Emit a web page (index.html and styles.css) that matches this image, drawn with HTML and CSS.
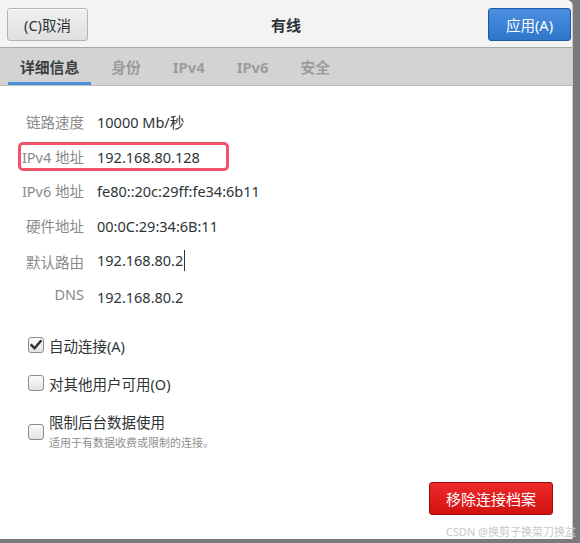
FILE: index.html
```html
<!DOCTYPE html>
<html>
<head>
<meta charset="utf-8">
<link rel="stylesheet" href="styles.css">
</head>
<body>
<div class="window">
  <div class="header">
    <button class="btn btn-cancel">(C)取消</button>
    <div class="title">有线</div>
    <button class="btn btn-apply">应用(A)</button>
  </div>
  <div class="tabs">
    <div class="tab active">详细信息</div>
    <div class="tab">身份</div>
    <div class="tab">IPv4</div>
    <div class="tab">IPv6</div>
    <div class="tab">安全</div>
  </div>
  <div class="content">
    <div class="details">
      <div class="row"><span class="label">链路速度</span><span class="value">10000 Mb/秒</span></div>
      <div class="row hl"><span class="label">IPv4 地址</span><span class="value">192.168.80.128</span><span class="highlight"></span></div>
      <div class="row short"><span class="label">IPv6 地址</span><span class="value">fe80::20c:29ff:fe34:6b11</span></div>
      <div class="row tall"><span class="label">硬件地址</span><span class="value">00:0C:29:34:6B:11</span></div>
      <div class="row"><span class="label">默认路由</span><span class="value">192.168.80.2<span class="caret"></span></span></div>
      <div class="row dns"><span class="label">DNS</span><span class="value">192.168.80.2</span></div>
    </div>
    <div class="checks">
      <div class="check"><span class="box checked"><svg width="12" height="12" viewBox="0 0 12 12"><path d="M1.5 6.2 L4.6 9.3 L10.6 2.2" fill="none" stroke="#2e3436" stroke-width="2.4" stroke-linecap="square"/></svg></span><span class="ctext">自动连接(A)</span></div>
      <div class="check"><span class="box"></span><span class="ctext">对其他用户可用(O)</span></div>
      <div class="check multi"><span class="box"></span><div class="ctexts"><span class="ctext">限制后台数据使用</span><span class="sub">适用于有数据收费或限制的连接。</span></div></div>
    </div>
    <div class="actions">
      <button class="btn btn-remove">移除连接档案</button>
    </div>
  </div>
  <div class="watermark">CSDN @换剪子换菜刀换盆</div>
</div>
</body>
</html>
```
FILE: styles.css
```css
* { box-sizing: border-box; }
html, body { margin: 0; padding: 0; }
body {
  width: 580px;
  height: 543px;
  background: #7a7a7a;
  font-family: "Noto Sans", "Noto Sans CJK SC", sans-serif;
  overflow: hidden;
}
.window {
  position: relative;
  width: 573px;
  height: 539px;
  background: #ffffff;
  border-top-right-radius: 6px;
  border-right: 1px solid #c8c8c8;
  display: flex;
  flex-direction: column;
}
.header {
  height: 48px;
  background: #f3f3f3;
  border-top-right-radius: 6px;
  border-bottom: 1px solid #a8a8a8;
  display: flex;
  align-items: center;
  justify-content: space-between;
  padding: 1px 1px 0 7px;
}
.btn {
  font-family: "Noto Sans", "Noto Sans CJK SC", sans-serif;
  font-size: 14.5px;
  height: 33px;
  border-radius: 3px;
  padding: 0;
  display: flex;
  align-items: center;
  justify-content: center;
}
.btn-cancel {
  width: 81px;
  color: #2e3436;
  background: linear-gradient(#f0f0f0, #e0e0e0);
  border: 1px solid #b4b4b4;
  box-shadow: inset 0 1px #fff;
}
.btn-apply {
  width: 83px;
  color: #ffffff;
  background: linear-gradient(#4a8ee0, #2f76cb);
  border: 1px solid #1d5aa3;
}
.title {
  font-size: 15px;
  font-weight: bold;
  color: #2e3436;
  position: absolute;
  left: 0;
  right: 0;
  top: 14px;
  text-align: center;
  pointer-events: none;
}
.tabs {
  height: 38px;
  background: #d3d3d3;
  border-bottom: 1px solid #bcbcbc;
  display: flex;
  padding-left: 8px;
  gap: 8px;
}
.tab {
  padding: 0 12px;
  font-size: 14.8px;
  font-weight: bold;
  color: #9c9c9c;
  display: flex;
  align-items: center;
  border-bottom: 3px solid transparent;
  padding-top: 3px;
}
.tab.active {
  color: #3a3f40;
  border-bottom-color: #4a90d9;
}
.content {
  flex: 1;
  display: flex;
  flex-direction: column;
  padding-top: 18px;
}
.details {
  display: flex;
  flex-direction: column;
}
.row {
  position: relative;
  height: 35px;
  display: flex;
  align-items: center;
  font-size: 14.5px;
}
.row.short { height: 33px; }
.row.tall { height: 37px; }
.label {
  width: 84px;
  text-align: right;
  color: #8a8a8a;
  flex: none;
}
.value {
  margin-left: 13px;
  color: #2e3436;
  position: relative;
}
.dns .label { position: relative; top: -3px; }
.highlight {
  position: absolute;
  left: 18px;
  top: 3px;
  width: 211px;
  height: 29px;
  border: 3px solid #f15268;
  border-radius: 5px;
}
.caret {
  display: inline-block;
  width: 1px;
  height: 21px;
  background: #2e3436;
  vertical-align: middle;
  margin-left: 1px;
  position: relative;
  top: -2px;
}
.checks {
  margin-top: 21px;
  padding-left: 28px;
  display: flex;
  flex-direction: column;
  gap: 18px;
}
.check {
  display: flex;
  align-items: center;
  gap: 5px;
  height: 20px;
}
.check.multi {
  height: 42px;
}
.box {
  width: 16px;
  height: 16px;
  border: 1px solid #8d8d8d;
  border-radius: 3px;
  background: linear-gradient(#fbfbfb, #e3e3e3);
  display: flex;
  align-items: center;
  justify-content: center;
  flex: none;
}
.ctext {
  font-size: 14.5px;
  color: #2e3436;
}
.ctexts {
  display: flex;
  flex-direction: column;
  line-height: 21px;
}
.sub {
  font-size: 11px;
  color: #8f8f8f;
  line-height: 19px;
}
.actions {
  display: flex;
  justify-content: flex-end;
  padding-right: 19px;
  margin-top: 29px;
}
.btn-remove {
  width: 124px;
  color: #ffffff;
  font-size: 15px;
  background: linear-gradient(#ee2a2a, #d21111);
  border: 1px solid #a30808;
}
.watermark {
  position: absolute;
  right: -4px;
  bottom: 0;
  font-size: 11px;
  color: #c8c8c8;
  white-space: nowrap;
}
```
